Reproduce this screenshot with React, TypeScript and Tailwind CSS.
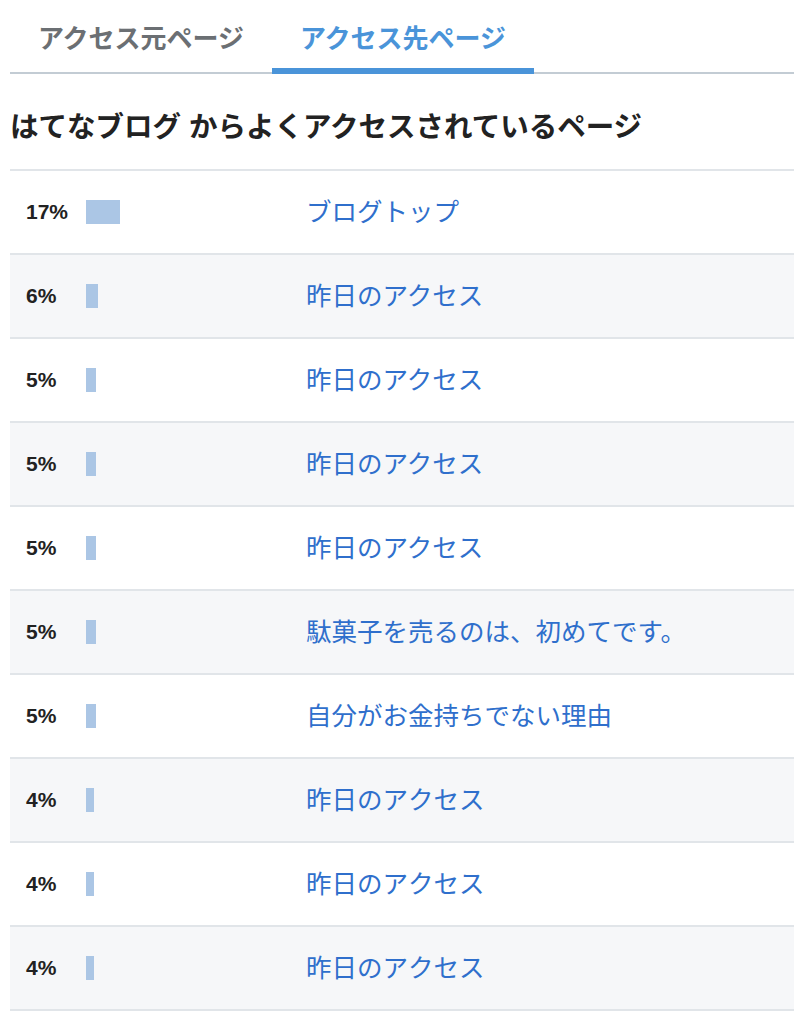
const rows = [
  { pct: 17, title: 'ブログトップ' },
  { pct: 6, title: '昨日のアクセス' },
  { pct: 5, title: '昨日のアクセス' },
  { pct: 5, title: '昨日のアクセス' },
  { pct: 5, title: '昨日のアクセス' },
  { pct: 5, title: '駄菓子を売るのは、初めてです。' },
  { pct: 5, title: '自分がお金持ちでない理由' },
  { pct: 4, title: '昨日のアクセス' },
  { pct: 4, title: '昨日のアクセス' },
  { pct: 4, title: '昨日のアクセス' },
]

export default function App() {
  return (
    <div
      className="min-h-screen bg-white pl-[10px]"
      style={{ fontFamily: '"Liberation Sans", "Noto Sans CJK JP", sans-serif' }}
    >
      {/* Tabs */}
      <div className="flex border-b-2 border-[#c3ccd4]">
        <div className="w-[262px] pt-[20px] pb-[9px] border-b-[6px] border-transparent text-center text-[26px] leading-[39px] font-bold text-[#6b6f73] -mb-[2px]">
          アクセス元ページ
        </div>
        <div className="w-[262px] pt-[20px] pb-[9px] border-b-[6px] border-[#4a94d9] text-center text-[26px] leading-[39px] font-bold text-[#4a94d9] -mb-[2px]">
          アクセス先ページ
        </div>
      </div>

      {/* Heading */}
      <h2 className="pt-[33px] pb-[22px] text-[28.5px] leading-[40px] font-bold text-[#222]">
        はてなブログ からよくアクセスされているページ
      </h2>

      {/* Table */}
      <div className="border-t-2 border-[#e1e5e9]">
        {rows.map((r, i) => (
          <div
            key={i}
            className={`flex items-center h-[84px] border-b-2 border-[#e1e5e9] ${i % 2 === 1 ? 'bg-[#f6f7f9]' : 'bg-white'}`}
          >
            <div className="w-[76px] pl-[16px] text-[21px] font-bold text-[#222]">{r.pct}%</div>
            <div className="w-[220px] flex items-center">
              <div className="h-[24px] bg-[#abc6e5]" style={{ width: r.pct * 2 }} />
            </div>
            <a href="#" className="text-[25.5px] text-[#2f6fcc]">
              {r.title}
            </a>
          </div>
        ))}
      </div>
    </div>
  )
}
